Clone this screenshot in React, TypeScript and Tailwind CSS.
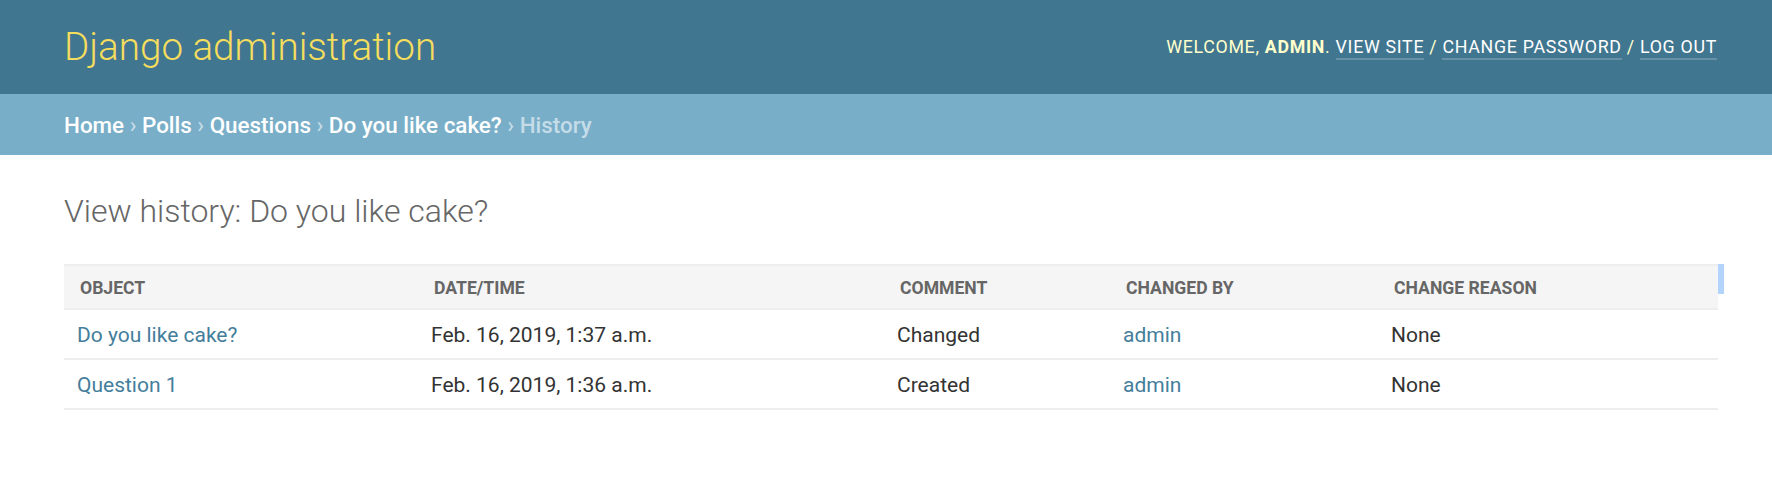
export default function App() {
  const rows = [
    { obj: "Do you like cake?", date: "Feb. 16, 2019, 1:37 a.m.", comment: "Changed", by: "admin", reason: "None" },
    { obj: "Question 1", date: "Feb. 16, 2019, 1:36 a.m.", comment: "Created", by: "admin", reason: "None" },
  ];
  const th = "border-y-2 border-[#eeeeee] bg-[#f5f5f5] pl-[16px] pr-[10px] pt-[9px] pb-[7px] text-left align-top text-[17.6px] font-bold uppercase leading-[26px] text-[#666666]";
  const td = "border-b-2 border-[#eeeeee] pl-[13px] pr-[10px] pt-[12px] pb-[10px] text-left align-top text-[21px] leading-[26px]";
  return (
    <div className="min-h-[488px] bg-white font-[Roboto,sans-serif] text-[#333333]">
      <header className="flex h-[94px] items-center justify-between bg-[#417690] pl-[64px] pr-[55px]">
        <h1 className="text-[38.6px] font-light leading-none text-[#f5dd5d]">Django administration</h1>
        <div className="text-[17.8px] font-normal uppercase tracking-[0.7px] text-[#ffffcc]">
          Welcome, <strong className="font-bold">admin</strong>.{" "}
          <a className="border-b-2 border-white/20 pb-[1px] text-white">View site</a> /{" "}
          <a className="border-b-2 border-white/20 pb-[1px] text-white">Change password</a> /{" "}
          <a className="border-b-2 border-white/20 pb-[1px] text-white">Log out</a>
        </div>
      </header>
      <nav className="flex h-[61px] items-center bg-[#79aec8] px-[64px] pt-[3px] text-[22.4px] font-medium text-[#c4dce8]">
        <span>
          <a className="text-white">Home</a> › <a className="text-white">Polls</a> ›{" "}
          <a className="text-white">Questions</a> › <a className="text-white">Do you like cake?</a> › History
        </span>
      </nav>
      <main className="pl-[64px] pr-[54px] pt-[40px]">
        <h1 className="mb-[37px] text-[32px] font-light leading-[32px] text-[#666666]">View history: Do you like cake?</h1>
        <div className="relative">
          <table className="w-full table-fixed border-separate border-spacing-0">
            <colgroup>
              <col className="w-[354px]" />
              <col className="w-[466px]" />
              <col className="w-[226px]" />
              <col className="w-[268px]" />
              <col />
            </colgroup>
            <thead>
              <tr>
                <th className={th}>Object</th>
                <th className={th}>Date/time</th>
                <th className={th}>Comment</th>
                <th className={th}>Changed by</th>
                <th className={th}>Change reason</th>
              </tr>
            </thead>
            <tbody>
              {rows.map((r) => (
                <tr key={r.obj}>
                  <td className={td}>
                    <a className="text-[#447e9b]">{r.obj}</a>
                  </td>
                  <td className={td}>{r.date}</td>
                  <td className={td}>{r.comment}</td>
                  <td className={td}>
                    <a className="text-[#447e9b]">{r.by}</a>
                  </td>
                  <td className={td}>{r.reason}</td>
                </tr>
              ))}
            </tbody>
          </table>
          <div className="absolute left-full top-0 h-[30px] w-[6px] bg-[#b3d4fc]" />
        </div>
      </main>
    </div>
  );
}
